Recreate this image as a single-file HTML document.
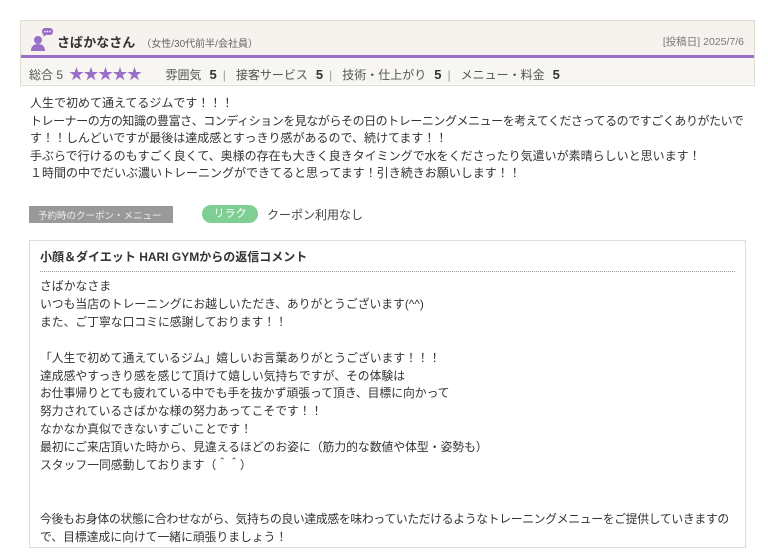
<!DOCTYPE html>
<html><head><meta charset="utf-8"><style>
*{margin:0;padding:0;box-sizing:border-box}
body{width:768px;height:555px;background:#fff;font-family:"Liberation Sans","Noto Sans CJK JP",sans-serif;color:#333;position:relative;overflow:hidden}
.hd{position:absolute;left:20px;top:20px;width:735px;height:66px;border:1px solid #e2ddd4;background:#fff}
.top{height:37px;background:#f6f3ee;border-bottom:3px solid #9b6fc8;position:relative}
.name{position:absolute;left:36px;top:11px;font-size:13px;font-weight:bold;color:#333}
.name small{font-size:10px;font-weight:normal;color:#666;margin-left:6px}
.date{position:absolute;right:10px;top:13px;font-size:10.5px;color:#777}
.rate{height:26px;background:#f8f6f2;font-size:12px;color:#555;padding:5px 0 0 8px;white-space:nowrap}
.rate b{font-size:13px;color:#333;margin:0 6px 0 8px}
.rate .sep{color:#999;margin-right:10px}
.stars{color:#9b6fc8;font-size:15px;letter-spacing:-0.5px;margin:0 24px 0 6px}
.body{position:absolute;left:30px;top:95px;width:740px;font-size:12px;line-height:17.6px;color:#333;white-space:nowrap}
.t{letter-spacing:-0.45px}
.cp{position:absolute;left:29px;top:206px;width:144px;height:17px;background:#999;color:#eee;font-size:9.5px;padding:2px 0 0 9px}
.rl{position:absolute;left:202px;top:205px;width:56px;height:18px;border-radius:9px;background:#7fcf94;color:#fff;font-size:11px;text-align:center;line-height:18px}
.nc{position:absolute;left:267px;top:206px;font-size:12px;color:#444}
.rp{position:absolute;left:29px;top:240px;width:717px;height:308px;border:1px solid #ddd}
.rp h3{margin:0 10px;padding:7px 0 6px;font-size:12px;border-bottom:1px dotted #999;color:#333}
.rp p{padding:6px 0 0 10px;font-size:11.8px;line-height:17.9px;color:#333;white-space:nowrap}
.u{letter-spacing:-0.3px}
</style></head><body>
<div class="hd">
 <div class="top">
  <svg style="position:absolute;left:10px;top:7px" width="24" height="24" viewBox="0 0 24 24">
   <circle cx="7" cy="12" r="4" fill="#9b6fc8"/><path d="M0 23c0-5 3-7 7-7s7 2 7 7z" fill="#9b6fc8"/>
   <rect x="11" y="0" width="11" height="7" rx="3" fill="#9b6fc8"/><path d="M13 6l-1 3 3-2z" fill="#9b6fc8"/>
   <circle cx="14" cy="3.5" r=".8" fill="#fff"/><circle cx="16.5" cy="3.5" r=".8" fill="#fff"/><circle cx="19" cy="3.5" r=".8" fill="#fff"/>
  </svg>
  <div class="name">さばかなさん<small>（女性/30代前半/会社員）</small></div>
  <div class="date">[投稿日] 2025/7/6</div>
 </div>
 <div class="rate">総合 5<span class="stars">★★★★★</span>雰囲気<b>5</b><span class="sep">|</span>接客サービス<b>5</b><span class="sep">|</span>技術・仕上がり<b>5</b><span class="sep">|</span>メニュー・料金<b>5</b></div>
</div>
<div class="body">人生で初めて通えてるジムです！！！<br><span class="t">トレーナーの方の知識の豊富さ、コンディションを見ながらその日のトレーニングメニューを考えてくださってるのですごくありがたいで</span><br>す！！しんどいですが最後は達成感とすっきり感があるので、続けてます！！<br>手ぶらで行けるのもすごく良くて、奥様の存在も大きく良きタイミングで水をくださったり気遣いが素晴らしいと思います！<br>１時間の中でだいぶ濃いトレーニングができてると思ってます！引き続きお願いします！！</div>
<div class="cp">予約時のクーポン・メニュー</div>
<div class="rl">リラク</div>
<div class="nc">クーポン利用なし</div>
<div class="rp"><h3>小顔＆ダイエット HARI GYMからの返信コメント</h3>
<p>さばかなさま<br>いつも当店のトレーニングにお越しいただき、ありがとうございます(^^)<br>また、ご丁寧な口コミに感謝しております！！<br><br>「人生で初めて通えているジム」嬉しいお言葉ありがとうございます！！！<br>達成感やすっきり感を感じて頂けて嬉しい気持ちですが、その体験は<br>お仕事帰りとても疲れている中でも手を抜かず頑張って頂き、目標に向かって<br>努力されているさばかな様の努力あってこそです！！<br>なかなか真似できないすごいことです！<br>最初にご来店頂いた時から、見違えるほどのお姿に（筋力的な数値や体型・姿勢も）<br>スタッフ一同感動しております（＾＾）<br><br><br><span class="u">今後もお身体の状態に合わせながら、気持ちの良い達成感を味わっていただけるようなトレーニングメニューをご提供していきますの</span><br>で、目標達成に向けて一緒に頑張りましょう！</p></div>
</body></html>
